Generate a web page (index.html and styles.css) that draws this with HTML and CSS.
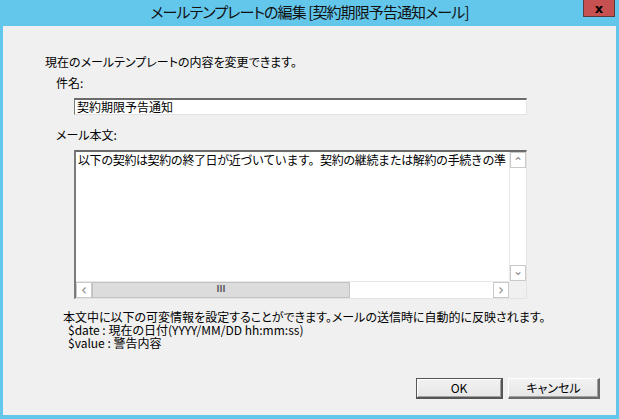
FILE: index.html
```html
<!DOCTYPE html>
<html lang="ja">
<head>
  <meta charset="UTF-8">
  <title>メールテンプレートの編集</title>
  <link rel="stylesheet" href="styles.css">
</head>
<body>
  <div class="window">
    <div class="titlebar">
      <span></span>
      <h1 class="title">メールテンプレートの編集 [契約期限予告通知メール]</h1>
      <button type="button" class="close">x</button>
    </div>
    <div class="client">
      <p class="intro">現在のメールテンプレートの内容を変更できます。</p>

      <div class="field">
        <div class="label">件名:</div>
        <div class="textbox">契約期限予告通知</div>
      </div>

      <div class="field">
        <div class="label label-body">メール本文:</div>
        <div class="memo">
          <div class="memo-text">以下の契約は契約の終了日が近づいています。契約の継続または解約の手続きの準</div>
          <div class="vscroll">
            <div class="sb-btn">&#8963;</div>
            <div class="sb-track"></div>
            <div class="sb-btn">&#8964;</div>
          </div>
          <div class="hscroll">
            <div class="sb-btn">&lsaquo;</div>
            <div class="sb-thumb">III</div>
            <div class="sb-track"></div>
            <div class="sb-btn">&rsaquo;</div>
          </div>
          <div class="corner"></div>
        </div>
      </div>

      <div class="help">
        <p>本文中に以下の可変情報を設定することができます。メールの送信時に自動的に反映されます。</p>
        <p class="var">$date : 現在の日付(YYYY/MM/DD hh:mm:ss)</p>
        <p class="var">$value : 警告内容</p>
      </div>

      <div class="actions">
        <button type="button" class="btn btn-default">OK</button>
        <button type="button" class="btn">キャンセル</button>
      </div>
    </div>
  </div>
</body>
</html>
```

FILE: styles.css
```css
body {
  margin: 0;
  padding: 0;
  background: #63c7ec;
  font-family: "Noto Sans CJK JP", sans-serif;
  font-size: 12px;
  font-feature-settings: "palt";
  color: #000;
}

.window {
  width: 619px;
  height: 419px;
  display: flex;
  flex-direction: column;
}

.titlebar {
  height: 26px;
  display: grid;
  grid-template-columns: 1fr auto 1fr;
  align-items: start;
}

.title {
  margin: 0;
  padding-top: 2px;
  font-size: 15px;
  font-weight: normal;
  line-height: 20px;
  color: #111;
  letter-spacing: -0.9px;
}

.close {
  justify-self: end;
  margin-right: 4px;
  width: 32px;
  height: 17px;
  padding: 0;
  background: #c75050;
  border: 1px solid #5a3a3a;
  border-top: none;
  color: #000;
  font-family: "DejaVu Sans", sans-serif;
  font-weight: bold;
  font-size: 13px;
  line-height: 13px;
}

.client {
  margin: 0 3px 4px 3px;
  flex: 1;
  background: #f0f0f0;
  padding: 29px 16px 0 42px;
  box-sizing: border-box;
}

p {
  margin: 0;
}

.intro {
  line-height: 14px;
}

.field {
  padding-left: 11px;
}

.label {
  margin-top: 7px;
  line-height: 14px;
}

.label-body {
  margin-top: 13px;
}

.textbox {
  margin: 8px 0 0 18px;
  width: 453px;
  height: 17px;
  box-sizing: border-box;
  background: #fff;
  border-style: solid;
  border-width: 2px 1px 1px 1px;
  border-color: #6b6b6b #e3e3e3 #e3e3e3 #7a7a7a;
  padding-left: 2px;
  line-height: 13px;
  white-space: nowrap;
  overflow: hidden;
}

.memo {
  margin: 8px 0 0 18px;
  width: 453px;
  height: 149px;
  box-sizing: border-box;
  background: #fff;
  border-style: solid;
  border-width: 2px 1px 1px 2px;
  border-color: #6b6b6b #e3e3e3 #e3e3e3 #7a7a7a;
  display: grid;
  grid-template-columns: minmax(0, 1fr) 17px;
  grid-template-rows: minmax(0, 1fr) 17px;
}

.memo-text {
  padding: 1px 0 0 2px;
  line-height: 14px;
  white-space: nowrap;
  overflow: hidden;
  font-feature-settings: normal;
  letter-spacing: -0.4px;
}

.vscroll {
  display: flex;
  flex-direction: column;
  border-left: 1px solid #e8e8e8;
}

.hscroll {
  display: flex;
  border-top: 1px solid #e8e8e8;
}

.sb-btn {
  width: 16px;
  height: 16px;
  box-sizing: border-box;
  border: 1px solid #c9c9c9;
  background: #fff;
  color: #8a8a8a;
  font-family: "DejaVu Sans", sans-serif;
  font-size: 12px;
  line-height: 14px;
  text-align: center;
}

.vscroll .sb-btn {
  line-height: 18px;
}

.vscroll .sb-btn:last-child {
  line-height: 10px;
}

.hscroll .sb-btn {
  font-size: 15px;
}

.sb-track {
  flex: 1;
  background: #fff;
}

.sb-thumb {
  width: 258px;
  height: 16px;
  box-sizing: border-box;
  background: #dcdcdc;
  border: 1px solid #c2c2c2;
  color: #606060;
  font-family: "DejaVu Sans", sans-serif;
  font-size: 8px;
  font-weight: bold;
  line-height: 14px;
  text-align: center;
}

.corner {
  background: #f0f0f0;
}

.help {
  margin-top: 11px;
  padding-left: 18px;
  line-height: 14px;
}

.help .var {
  padding-left: 5px;
  line-height: 12px;
}

.help .var + .var {
  margin-top: 1px;
}

.actions {
  margin-top: 29px;
  display: flex;
  justify-content: flex-end;
  gap: 5px;
}

.btn {
  height: 21px;
  width: 92px;
  padding: 0;
  font-family: "Noto Sans CJK JP", sans-serif;
  font-feature-settings: "palt";
  font-size: 12px;
  line-height: 16px;
  color: #000;
  background: linear-gradient(#f2f2f2, #e6e6e6);
  border-style: solid;
  border-width: 1px 2px 2px 1px;
  border-color: #fff #6a6a6a #6a6a6a #fff;
  box-shadow: inset -1px -1px 0 #a0a0a0;
}

.btn-default {
  width: 87px;
  border-color: #555;
  box-shadow: inset 1px 1px 0 #fff, inset -1px -1px 0 #a0a0a0;
}
```
